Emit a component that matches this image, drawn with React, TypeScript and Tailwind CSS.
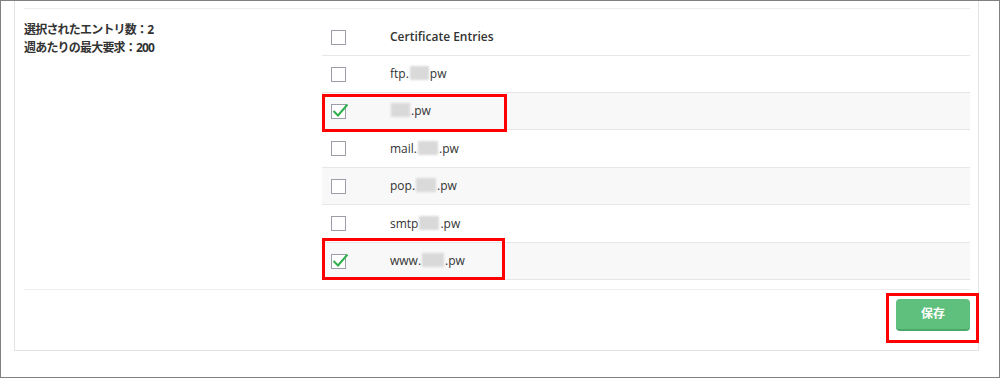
import React from 'react';

interface Entry {
  prefix: string;
  suffix: string;
  checked: boolean;
  blur: number;
}

const entries: Entry[] = [
  { prefix: 'ftp.', suffix: 'pw', checked: false, blur: 19 },
  { prefix: '', suffix: '.pw', checked: true, blur: 19 },
  { prefix: 'mail.', suffix: '.pw', checked: false, blur: 20 },
  { prefix: 'pop.', suffix: '.pw', checked: false, blur: 20 },
  { prefix: 'smtp', suffix: '.pw', checked: false, blur: 20 },
  { prefix: 'www.', suffix: '.pw', checked: true, blur: 22 },
];

const rowHeights = ['h-[37px]', 'h-[37px]', 'h-[38px]', 'h-[37px]', 'h-[38px]', 'h-[37px]'];

function Checkbox({ checked }: { checked: boolean }) {
  return (
    <span className="relative inline-block w-[15px] h-[15px] border border-[#9b9ea6] bg-white">
      {checked && (
        <svg className="absolute left-[0px] top-[-3px]" width="17" height="16" viewBox="0 0 17 16">
          <path d="M1.5 9 L6 13.5 L15.5 2.5" fill="none" stroke="#2fb04c" strokeWidth="2" />
        </svg>
      )}
    </span>
  );
}

function Blurred({ w }: { w: number }) {
  return (
    <span
      className="inline-block h-[14px] bg-[#d9d9d9] blur-[1px] align-[-2px] mx-[1px]"
      style={{ width: w }}
    />
  );
}

export default function App() {
  return (
    <div
      className="relative w-[1000px] h-[378px] border border-[#808080] bg-white overflow-hidden"
      style={{ fontFamily: '"Open Sans", "Noto Sans CJK JP", sans-serif' }}
    >
      {/* Panel */}
      <div className="ml-[13px] w-[965px] h-[350px] border border-t-0 border-[#e3e3e3] pl-[9px] pr-[8px]">
        <div className="h-[8px] border-b border-[#ededed]" />

        <div className="flex pt-[10px]">
          {/* Summary */}
          <div className="w-[298px] pt-[2px] text-[12px] tracking-[-0.8px] font-bold text-[#333] leading-[18px]">
            <div>選択されたエントリ数：2</div>
            <div>週あたりの最大要求：200</div>
          </div>

          {/* Entries table */}
          <div className="flex-1 text-[12px] text-[#333]">
            <div className="flex items-center h-[37px] border-b border-[#e6e6e6]">
              <div className="w-[68px] pl-[9px] flex items-center">
                <Checkbox checked={false} />
              </div>
              <span className="font-semibold">Certificate Entries</span>
            </div>
            {entries.map((e, i) => (
              <div
                key={i}
                className={`flex items-center border-b border-[#e6e6e6] ${rowHeights[i]} ${i % 2 === 1 ? 'bg-[#f8f8f8]' : 'bg-white'}`}
              >
                <div className="w-[68px] pl-[9px] flex items-center">
                  <Checkbox checked={e.checked} />
                </div>
                <span className="whitespace-nowrap">
                  {e.prefix}
                  <Blurred w={e.blur} />
                  {e.suffix}
                </span>
              </div>
            ))}
          </div>
        </div>

        {/* Footer */}
        <div className="mt-[9px] border-t border-[#ededed] pt-[9px] flex justify-end">
          <button className="w-[74px] h-[32px] rounded-[4px] bg-[#5fbf7c] border-b-2 border-[#4ca868] text-white text-[12px] font-bold">
            保存
          </button>
        </div>
      </div>

      {/* Annotation boxes */}
      <div className="absolute left-[321px] top-[93px] w-[185px] h-[38px] border-[3px] border-[#ff0000]" />
      <div className="absolute left-[321px] top-[237px] w-[183px] h-[42px] border-[3px] border-[#ff0000]" />
      <div className="absolute left-[885px] top-[292px] w-[93px] h-[50px] border-[3px] border-[#ff0000]" />
    </div>
  );
}
